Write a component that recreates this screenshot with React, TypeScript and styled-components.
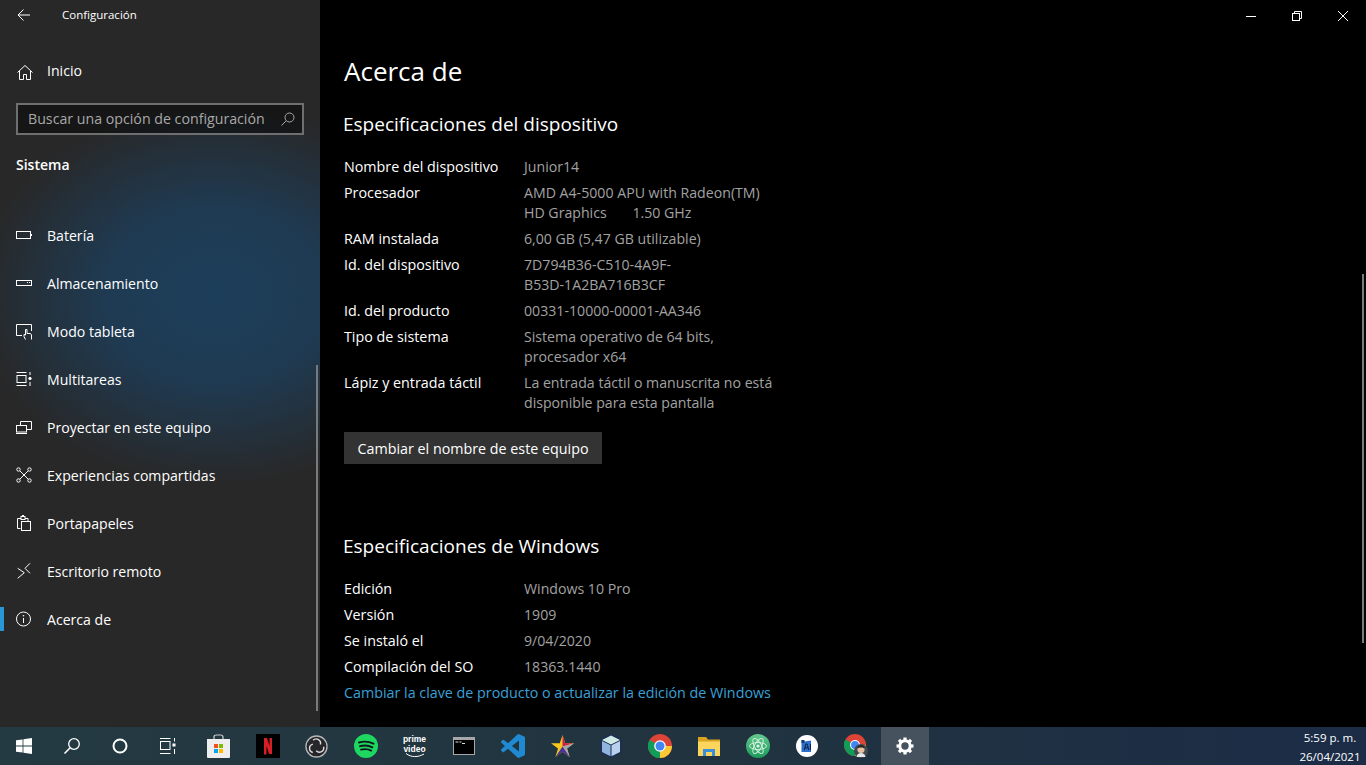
import React from "react";
import styled, { createGlobalStyle } from "styled-components";

const GlobalStyle = createGlobalStyle`
  html, body {
    margin: 0;
    padding: 0;
    background: #000;
  }
  body {
    font-family: "Open Sans", "Noto Sans", sans-serif;
    overflow: hidden;
  }
`;

const Screen = styled.div`
  width: 1366px;
  height: 765px;
  display: flex;
  flex-direction: column;
  overflow: hidden;
`;

const Desktop = styled.div`
  flex: 1;
  display: flex;
  min-height: 0;
`;

const Sidebar = styled.aside`
  position: relative;
  width: 320px;
  flex: none;
  color: #fff;
  background:
    radial-gradient(ellipse 240px 190px at 215px 295px, rgba(29, 62, 90, 1) 0%, rgba(29, 62, 90, 0.85) 45%, rgba(39, 39, 39, 0) 100%),
    #282828;
`;

const TitleRow = styled.div`
  height: 29px;
  display: flex;
  align-items: center;
  font-size: 11.5px;
  svg {
    width: 48px;
    flex: none;
    margin-right: 14px;
  }
`;

const HomeRow = styled.div`
  height: 48px;
  margin-top: 17px;
  display: flex;
  align-items: center;
  font-size: 14.1px;
`;

const IconSlot = styled.span<{ $nudge?: number }>`
  width: 47px;
  flex: none;
  padding-left: 15px;
  box-sizing: border-box;
  display: flex;
  margin-top: ${(p) => p.$nudge ?? 0}px;
`;

const SearchBox = styled.div`
  height: 32px;
  margin: 9px 16px 0;
  padding: 0 6px 2px 10px;
  box-sizing: border-box;
  border: 2px solid #6f6f6f;
  background: rgba(0, 0, 0, 0.45);
  color: #a8a8a8;
  font-size: 14.2px;
  display: flex;
  align-items: center;
  justify-content: space-between;
  svg {
    margin-top: 2px;
  }
`;

const SectionName = styled.div`
  margin: 18px 16px 0;
  height: 24px;
  line-height: 24px;
  font-size: 14px;
  font-weight: 600;
`;

const NavList = styled.nav`
  margin-top: 34px;
`;

const NavItem = styled.div<{ $active?: boolean }>`
  position: relative;
  height: 48px;
  display: flex;
  align-items: center;
  font-size: 14.1px;
  &::before {
    content: "";
    display: ${(p) => (p.$active ? "block" : "none")};
    position: absolute;
    left: 0;
    top: 12px;
    width: 4px;
    height: 24px;
    background: #2b96d6;
  }
`;

const SideScroll = styled.div`
  position: absolute;
  right: 2px;
  top: 365px;
  bottom: 16px;
  width: 2px;
  background: #7a7a7a;
`;

const Main = styled.main`
  position: relative;
  flex: 1;
  background: #000;
  color: #fff;
`;

const WindowBar = styled.div`
  height: 32px;
  display: flex;
  justify-content: flex-end;
`;

const WindowButton = styled.span`
  width: 46px;
  display: flex;
  align-items: center;
  justify-content: center;
`;

const Content = styled.div`
  padding-left: 24px;
`;

const PageTitle = styled.h1`
  margin: 20px 0 0;
  height: 38px;
  line-height: 38px;
  font-size: 26px;
  font-weight: 400;
`;

const SectionTitle = styled.h2<{ $top: number }>`
  margin: ${(p) => p.$top}px 0 19px -1px;
  height: 28px;
  line-height: 28px;
  font-size: 19px;
  font-weight: 400;
`;

const SpecList = styled.div`
  display: flex;
  flex-direction: column;
  gap: 6px;
`;

const SpecRow = styled.div`
  display: flex;
  font-size: 14.3px;
  line-height: 20px;
`;

const SpecLabel = styled.div`
  width: 180px;
  flex: none;
  color: #fff;
`;

const SpecValue = styled.div`
  width: 270px;
  font-size: 14.15px;
  color: #a2a2a2;
`;

const RenameButton = styled.div`
  width: 258px;
  height: 32px;
  margin-top: 19px;
  background: #333;
  font-size: 14.3px;
  display: flex;
  align-items: center;
  justify-content: center;
`;

const ProductLink = styled.div`
  margin-top: 6px;
  font-size: 14.3px;
  line-height: 20px;
  color: #3aa0d8;
`;

const MainScroll = styled.div`
  position: absolute;
  right: 2px;
  top: 274px;
  width: 2px;
  height: 369px;
  background: #7a7a7a;
`;

const Taskbar = styled.footer`
  height: 38px;
  flex: none;
  display: flex;
  align-items: stretch;
  color: #fff;
  background: linear-gradient(90deg, #243a42 0%, #20333f 55%, #1c2c47 100%);
`;

const SystemGroup = styled.div`
  display: flex;
`;

const AppGroup = styled.div`
  display: flex;
  margin-left: 2px;
`;

const SystemIcon = styled.span`
  width: 48px;
  display: flex;
  align-items: center;
  justify-content: center;
`;

const TaskIcon = styled.span<{ $selected?: boolean }>`
  width: ${(p) => (p.$selected ? "48px" : "49px")};
  margin-left: ${(p) => (p.$selected ? "1px" : "0")};
  flex: none;
  display: flex;
  align-items: center;
  justify-content: center;
  background: ${(p) => (p.$selected ? "#46535f" : "transparent")};
`;

const Clock = styled.div`
  margin-left: auto;
  width: 68px;
  margin-right: 2px;
  font-size: 11.5px;
  line-height: 19px;
  text-align: center;
  padding-top: 1px;
`;

const PrimeBadge = styled.span`
  display: flex;
  flex-direction: column;
  align-items: center;
  color: #fff;
  font-family: "Liberation Sans", sans-serif;
  font-size: 8.5px;
  line-height: 10px;
  font-weight: 700;
  svg {
    margin-top: -1px;
  }
`;

const NavIcon = ({ children }: { children: React.ReactNode }) => (
  <svg width="18" height="18" viewBox="0 0 18 18" fill="none" stroke="#fff" strokeWidth="1">
    {children}
  </svg>
);

const navItems: { label: string; icon: React.ReactNode; active?: boolean }[] = [
  {
    label: "Batería",
    icon: (
      <>
        <rect x="1.5" y="5.5" width="14" height="7" />
        <path d="M16.5 8v2" />
      </>
    ),
  },
  {
    label: "Almacenamiento",
    icon: (
      <>
        <rect x="1.5" y="6.5" width="15" height="5" />
        <path d="M12 8.5h3" strokeDasharray="1 1" />
      </>
    ),
  },
  {
    label: "Modo tableta",
    icon: (
      <>
        <path d="M7 13.5H1.5V2.5h15V9" />
        <path d="M10.5 17.5l-1.5-3v-2l1.5.5V7.5h1.5v4h3.5l1 1.5v4.5" />
      </>
    ),
  },
  {
    label: "Multitareas",
    icon: (
      <>
        <path d="M1.5 2.5h10M1.5 15.5h10" />
        <rect x="2" y="5.5" width="9" height="7" />
        <path d="M15 2v3M15 12v4" />
        <circle cx="15" cy="8.5" r="1.2" fill="#fff" />
      </>
    ),
  },
  {
    label: "Proyectar en este equipo",
    icon: (
      <>
        <path d="M5.5 7V3.5h11v8h-5" />
        <rect x="1.5" y="7.5" width="10" height="6.5" />
        <path d="M1 15.5h11" />
      </>
    ),
  },
  {
    label: "Experiencias compartidas",
    icon: (
      <>
        <circle cx="3.5" cy="3.5" r="1.7" />
        <circle cx="14.5" cy="3.5" r="1.7" />
        <circle cx="3.5" cy="14.5" r="1.7" />
        <circle cx="14.5" cy="14.5" r="1.7" />
        <path d="M5 5l8 8M13 5l-8 8" />
      </>
    ),
  },
  {
    label: "Portapapeles",
    icon: (
      <>
        <path d="M5.5 14.5H2.5V4.5H6M10 4.5h3v3" />
        <rect x="6" y="2.5" width="4" height="3" />
        <path d="M7 1.5h2" />
        <rect x="6.5" y="7.5" width="9" height="9" />
      </>
    ),
  },
  {
    label: "Escritorio remoto",
    icon: (
      <>
        <path d="M2.7 6.3l6.6 4.4-6.6 5.6" />
        <path d="M15 1.3l-5 5 5 5" />
      </>
    ),
  },
  {
    label: "Acerca de",
    active: true,
    icon: (
      <>
        <circle cx="8.5" cy="9" r="7" />
        <path d="M8.5 8v5" />
        <circle cx="8.5" cy="5.7" r=".8" fill="#fff" stroke="none" />
      </>
    ),
  },
];

const deviceSpecs: [string, React.ReactNode][] = [
  ["Nombre del dispositivo", "Junior14"],
  ["Procesador", <>AMD A4-5000 APU with Radeon(TM)<br />HD Graphics &nbsp;&nbsp;&nbsp;&nbsp;&nbsp; 1.50 GHz</>],
  ["RAM instalada", "6,00 GB (5,47 GB utilizable)"],
  ["Id. del dispositivo", <>7D794B36-C510-4A9F-<br />B53D-1A2BA716B3CF</>],
  ["Id. del producto", "00331-10000-00001-AA346"],
  ["Tipo de sistema", <>Sistema operativo de 64 bits,<br />procesador x64</>],
  ["Lápiz y entrada táctil", <>La entrada táctil o manuscrita no está<br />disponible para esta pantalla</>],
];

const windowsSpecs: [string, string][] = [
  ["Edición", "Windows 10 Pro"],
  ["Versión", "1909"],
  ["Se instaló el", "9/04/2020"],
  ["Compilación del SO", "18363.1440"],
];

const gearAngles = [0, 45, 90, 135, 180, 225, 270, 315];

const Chrome = () => (
  <svg width="24" height="24" viewBox="0 0 24 24">
    <circle cx="12" cy="12" r="12" fill="#db4437" />
    <path d="M12 12L1.6 18A12 12 0 0 1 1.6 6z" fill="#0f9d58" />
    <path d="M12 12L1.6 18A12 12 0 0 0 12 24z" fill="#0f9d58" />
    <path d="M12 12h12A12 12 0 0 1 12 24z" fill="#fcc934" />
    <circle cx="12" cy="12" r="5.8" fill="#fff" />
    <circle cx="12" cy="12" r="4.5" fill="#4285f4" />
  </svg>
);

const SystemIcons = () => (
  <SystemGroup>
    <SystemIcon>
      <svg width="16" height="16" viewBox="0 0 16 16" fill="#fff">
        <path d="M0 2.3l6.6-.9v6.2H0zM7.4 1.3L16 0v7.6H7.4zM0 8.4h6.6v6.2L0 13.7zM7.4 8.4H16V16l-8.6-1.3z" />
      </svg>
    </SystemIcon>
    <SystemIcon>
      <svg width="18" height="18" viewBox="0 0 18 18" fill="none" stroke="#fff" strokeWidth="1.3">
        <circle cx="11" cy="7" r="5.3" />
        <path d="M7.2 10.8L1.5 16.5" strokeWidth="1.6" />
      </svg>
    </SystemIcon>
    <SystemIcon>
      <svg width="16" height="16" viewBox="0 0 16 16" fill="none" stroke="#fff" strokeWidth="2">
        <circle cx="8" cy="8" r="6.5" />
      </svg>
    </SystemIcon>
    <SystemIcon>
      <svg width="16" height="16" viewBox="0 0 16 16" fill="none" stroke="#fff" strokeWidth="1">
        <path d="M0 .5h10.5M0 15.5h10.5M14.5 0v3.500M14.5 11v5" />
        <rect x=".5" y="3.5" width="9.5" height="8" />
        <rect x="12.5" y="5.5" width="3" height="3" fill="#fff" stroke="none" />
      </svg>
    </SystemIcon>
  </SystemGroup>
);

const AppIcons = () => (
  <AppGroup>
    <TaskIcon>
      <svg width="23" height="24" viewBox="0 0 23 24">
        <path d="M7 6V3C7 1.7 8 1 9.5 1h4C15 1 16 1.7 16 3v3" fill="none" stroke="#d0d0d0" strokeWidth="1.2" />
        <path d="M0 5h23v18a1 1 0 0 1-1 1H1a1 1 0 0 1-1-1z" fill="#eeeeee" />
        <rect x="7" y="10" width="4" height="4" fill="#f25022" />
        <rect x="12" y="10" width="4" height="4" fill="#7fba00" />
        <rect x="7" y="15" width="4" height="4" fill="#00a4ef" />
        <rect x="12" y="15" width="4" height="4" fill="#ffb900" />
      </svg>
    </TaskIcon>
    <TaskIcon>
      <svg width="24" height="24" viewBox="0 0 24 24">
        <rect width="24" height="24" fill="#000" />
        <path d="M8 4h3l2.5 8V4H16v16h-3l-2.500-8v8.500H8z" fill="#d81f26" />
      </svg>
    </TaskIcon>
    <TaskIcon>
      <svg width="23" height="23" viewBox="0 0 24 24">
        <circle cx="12" cy="12" r="11" fill="#26262b" stroke="#b5b5b5" strokeWidth="1.4" />
        {[0, 120, 240].map((a) => (
          <path
            key={a}
            d="M8.5 5.5a4.5 4.5 0 0 1 7.5 4.5"
            fill="none"
            stroke="#dedede"
            strokeWidth="1.5"
            transform={`rotate(${a} 12 12)`}
          />
        ))}
      </svg>
    </TaskIcon>
    <TaskIcon>
      <svg width="24" height="24" viewBox="0 0 24 24">
        <circle cx="12" cy="12" r="12" fill="#1ed760" />
        <path d="M5 8.5c5-1.4 10-1 14.5 1.2M6 12.2c4.4-1.100 8.600-.8 12.400 1.100M7 15.600c3.700-.9 7.200-.6 10.200 1" fill="none" stroke="#10181a" strokeWidth="1.9" strokeLinecap="round" />
      </svg>
    </TaskIcon>
    <TaskIcon>
      <PrimeBadge>
        <span>prime</span>
        <span>video</span>
        <svg width="20" height="5" viewBox="0 0 20 5">
          <path d="M1 .5c5 4 12 4 18 .5" fill="none" stroke="#fff" strokeWidth="1" />
        </svg>
      </PrimeBadge>
    </TaskIcon>
    <TaskIcon>
      <svg width="22" height="18" viewBox="0 0 22 18">
        <rect width="22" height="18" fill="#a8a8a8" />
        <rect x="1" y="3" width="20" height="14" fill="#000" />
        <path d="M2.5 5h3M6.5 5h2M9 6.5h3" stroke="#ddd" strokeWidth="1" />
      </svg>
    </TaskIcon>
    <TaskIcon>
      <svg width="24" height="24" viewBox="0 0 24 24">
        <path
          d="M23.15 2.587L18.21.21a1.494 1.494 0 0 0-1.705.29l-9.46 8.63-4.12-3.128a.999.999 0 0 0-1.276.057L.327 7.261A1 1 0 0 0 .326 8.74L3.899 12 .326 15.26a1 1 0 0 0 .001 1.479L1.65 17.94a.999.999 0 0 0 1.276.057l4.12-3.128 9.46 8.63a1.492 1.492 0 0 0 1.704.29l4.942-2.377A1.5 1.5 0 0 0 24 20.06V3.939a1.5 1.5 0 0 0-.85-1.352zm-5.146 14.861L10.826 12l7.178-5.448v10.896z"
          fill="#1f8ad2"
        />
      </svg>
    </TaskIcon>
    <TaskIcon>
      <svg width="24" height="24" viewBox="0 0 24 24">
        <path d="M12.5 1l2.7 8.2H24l-7 5.2 2.6 8.6-7.1-5.3-7.1 5.3 2.6-8.6-7-5.2h8.8z" fill="#f7c71f" />
        <path d="M12.5 1l2.7 8.2H24l-11.5 3.3z" fill="#c7224f" />
        <path d="M24 9.2l-7 5.2 2.6 8.6-7.1-10.5z" fill="#a5a5b0" />
        <path d="M19.6 23l-7.1-5.3-7.1 5.3 7.1-10.5z" fill="#4a2f9c" />
      </svg>
    </TaskIcon>
    <TaskIcon>
      <svg width="22" height="24" viewBox="0 0 22 24" strokeLinejoin="round">
        <path d="M11 .5L21 5.5v13L11 23.5 1 18.5v-13z" fill="#1d2f52" stroke="#1d2f52" strokeWidth="1" />
        <path d="M11 1.5l9 4.5-9 4.5L2 6z" fill="#cfe9e4" />
        <path d="M2 7l8.5 4.3v11L2 18z" fill="#90b4e0" />
        <path d="M20 7l-8.5 4.3v11L20 18z" fill="#b9d0ee" />
      </svg>
    </TaskIcon>
    <TaskIcon>
      <Chrome />
    </TaskIcon>
    <TaskIcon>
      <svg width="22" height="19" viewBox="0 0 22 19">
        <path d="M0 0h8l2 2.5h12V18a1 1 0 0 1-1 1H1a1 1 0 0 1-1-1z" fill="#d9a521" />
        <path d="M0 4.5h22V19H0z" fill="#fbd55c" />
        <path d="M5 12h12v7h-3v-4H8v4H5z" fill="#3a8fd9" />
      </svg>
    </TaskIcon>
    <TaskIcon>
      <svg width="24" height="24" viewBox="0 0 24 24">
        <defs>
          <linearGradient id="atomFill" x1="0" y1="0" x2="0" y2="1">
            <stop offset="0" stopColor="#65c88e" />
            <stop offset="1" stopColor="#1b9a5b" />
          </linearGradient>
        </defs>
        <circle cx="12" cy="12" r="12" fill="url(#atomFill)" />
        <g fill="none" stroke="#d8f3e2" strokeWidth=".9">
          <ellipse cx="12" cy="12" rx="8.5" ry="3.5" transform="rotate(60 12 12)" />
          <ellipse cx="12" cy="12" rx="8.5" ry="3.5" transform="rotate(-60 12 12)" />
          <ellipse cx="12" cy="12" rx="8.5" ry="3.5" />
        </g>
        <circle cx="12" cy="12" r="1.6" fill="#e6f7ec" />
      </svg>
    </TaskIcon>
    <TaskIcon>
      <svg width="22" height="22" viewBox="0 0 22 22">
        <circle cx="11" cy="11" r="11" fill="#fff" />
        <path d="M5.5 5l3 1.5 6.5-1v11.500H5.5z" fill="#2a6fc9" />
        <path d="M5.5 5h3v3h-3z" fill="#163d73" />
        <path d="M8.2 15l1.7-6h1.2l1.7 6M9 12.800h3.200M14.500 9v6" fill="none" stroke="#10223f" strokeWidth="1" />
      </svg>
    </TaskIcon>
    <TaskIcon>
      <svg width="24" height="24" viewBox="0 0 24 24">
        <circle cx="11" cy="11" r="11" fill="#db4437" />
        <path d="M11 11L1.5 16.5A11 11 0 0 1 1.5 5.5z" fill="#0f9d58" />
        <path d="M11 11l-9.5 5.5A11 11 0 0 0 11 22z" fill="#0f9d58" />
        <path d="M11 11h11A11 11 0 0 1 11 22z" fill="#fcc934" />
        <circle cx="11" cy="11" r="5" fill="#fff" />
        <circle cx="11" cy="11" r="3.9" fill="#4285f4" />
        <circle cx="17" cy="17" r="7" fill="#3e4a4e" />
        <circle cx="17" cy="15.5" r="3.6" fill="#e6bfa4" />
        <path d="M13.4 15c0-3 1.5-4 3.6-4s3.6 1 3.6 4c-1-1.400-2-1.600-3.600-1.600S14.400 13.600 13.400 15z" fill="#2a2420" />
        <path d="M12.5 23c.5-3 2.5-4 4.5-4s4 1 4.500 4z" fill="#e8e8e8" />
      </svg>
    </TaskIcon>
    <TaskIcon $selected>
      <svg width="18" height="18" viewBox="0 0 18 18" fill="none" stroke="#fff">
        <circle cx="9" cy="9" r="5.2" strokeWidth="3" />
        {gearAngles.map((a) => (
          <path key={a} d="M9 .5v3" strokeWidth="3.2" transform={`rotate(${a} 9 9)`} />
        ))}
      </svg>
    </TaskIcon>
  </AppGroup>
);

export default function App() {
  return (
    <>
      <GlobalStyle />
      <Screen>
        <Desktop>
          <Sidebar>
            <TitleRow>
              <svg height="14" viewBox="0 0 48 14" fill="none" stroke="#fff" strokeWidth="1">
                <path d="M30 7H18M23.5 1.5L18 7l5.5 5.5" />
              </svg>
              Configuración
            </TitleRow>
            <HomeRow>
              <IconSlot $nudge={3}>
                <svg width="18" height="18" viewBox="-1 0 18 18" fill="none" stroke="#fff" strokeWidth="1">
                  <path d="M1.5 9.5L9 2.5l7.500 7M3.500 8v8.500h4v-5h3v5h4V8" />
                </svg>
              </IconSlot>
              Inicio
            </HomeRow>
            <SearchBox>
              Buscar una opción de configuración
              <svg width="16" height="16" viewBox="0 0 16 16" fill="none" stroke="#a8a8a8" strokeWidth="1">
                <circle cx="9.5" cy="6.5" r="4.5" />
                <path d="M6.3 9.7L1.5 14.5" />
              </svg>
            </SearchBox>
            <SectionName>Sistema</SectionName>
            <NavList>
              {navItems.map((item) => (
                <NavItem key={item.label} $active={item.active}>
                  <IconSlot>
                    <NavIcon>{item.icon}</NavIcon>
                  </IconSlot>
                  {item.label}
                </NavItem>
              ))}
            </NavList>
            <SideScroll />
          </Sidebar>
          <Main>
            <WindowBar>
              <WindowButton>
                <svg width="10" height="10" viewBox="0 0 10 10" stroke="#fff" strokeWidth="1">
                  <path d="M0 5.5h10" />
                </svg>
              </WindowButton>
              <WindowButton>
                <svg width="10" height="10" viewBox="0 0 10 10" fill="none" stroke="#fff" strokeWidth="1">
                  <rect x=".5" y="2.5" width="7" height="7" />
                  <path d="M2.5 2.5V.5h7v7h-2" />
                </svg>
              </WindowButton>
              <WindowButton>
                <svg width="10" height="10" viewBox="0 0 10 10" stroke="#fff" strokeWidth="1">
                  <path d="M0 0l10 10M10 0L0 10" />
                </svg>
              </WindowButton>
            </WindowBar>
            <Content>
              <PageTitle>Acerca de</PageTitle>
              <SectionTitle $top={20}>Especificaciones del dispositivo</SectionTitle>
              <SpecList>
                {deviceSpecs.map(([label, value]) => (
                  <SpecRow key={label}>
                    <SpecLabel>{label}</SpecLabel>
                    <SpecValue>{value}</SpecValue>
                  </SpecRow>
                ))}
              </SpecList>
              <RenameButton>Cambiar el nombre de este equipo</RenameButton>
              <SectionTitle $top={68}>Especificaciones de Windows</SectionTitle>
              <SpecList>
                {windowsSpecs.map(([label, value]) => (
                  <SpecRow key={label}>
                    <SpecLabel>{label}</SpecLabel>
                    <SpecValue>{value}</SpecValue>
                  </SpecRow>
                ))}
              </SpecList>
              <ProductLink>Cambiar la clave de producto o actualizar la edición de Windows</ProductLink>
            </Content>
            <MainScroll />
          </Main>
        </Desktop>
        <Taskbar>
          <SystemIcons />
          <AppIcons />
          <Clock>
            5:59 p. m.
            <br />
            26/04/2021
          </Clock>
        </Taskbar>
      </Screen>
    </>
  );
}
